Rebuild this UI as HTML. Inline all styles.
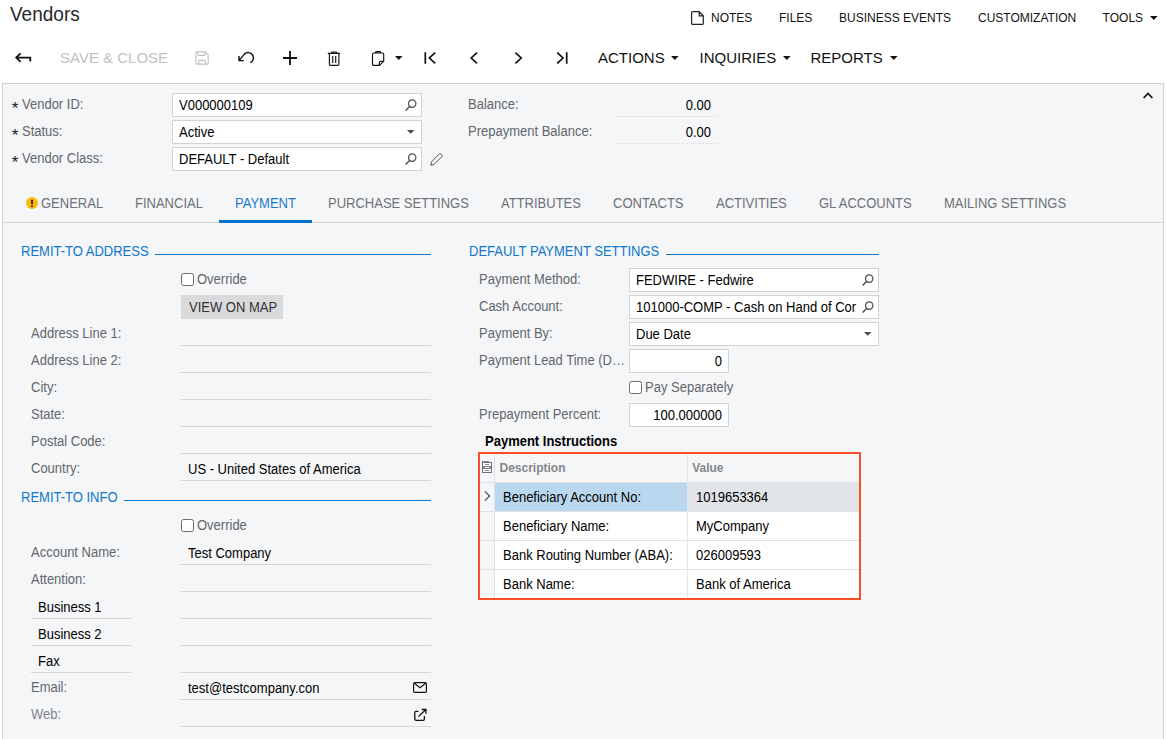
<!DOCTYPE html>
<html><head><meta charset="utf-8"><title>Vendors</title>
<style>
*{box-sizing:border-box;margin:0;padding:0}
html,body{width:1166px;height:739px;overflow:hidden;background:#fff}
body{font-family:"Liberation Sans",Arial,sans-serif;font-size:13px;color:#000;position:relative}
.a{position:absolute;white-space:nowrap;line-height:16px}
.lbl{color:#62666c}
.dis{color:#82858a}
.title{left:10px;top:2px;font-size:19.6px;line-height:24px;color:#26262c;transform:scaleX(.9694);transform-origin:0 0}
.top{font-size:12px;color:#111;top:10px}
.tb{font-size:15px;color:#111;top:49px;line-height:18px}
.panel{position:absolute;left:2px;top:83px;width:1162px;height:660px;background:#f5f6f8;border:1px solid #cfd1d5}
.inp{position:absolute;height:24px;background:#fff;border:1px solid #d0d2d6}
.r{text-align:right}
.s{font-size:14px;transform:scaleX(.92857);transform-origin:0 0;margin-top:-1px}
.s.r{transform-origin:100% 0}
.ul{position:absolute;height:1px;background:#d3d5d9}
.dot{position:absolute;height:1px;width:100px;border-top:1px dotted #dcdee1}
.tab{top:196px;color:#6e7277}
.sec{color:#0f76c9}
.sline{position:absolute;height:1px;background:#0f76c9}
.cb{position:absolute;width:13px;height:13px;border:1px solid #6b6b6b;border-radius:2.5px;background:#fff}
svg{position:absolute;overflow:visible}
.car{position:absolute;width:0;height:0;border-left:3.7px solid transparent;border-right:3.7px solid transparent;border-top:3.8px solid #111}
</style></head><body>
<div class="a title">Vendors</div>

<!-- top right links -->
<svg style="left:691px;top:11px" width="13" height="14" viewBox="0 0 13 14"><path d="M1.2 0.7H8.2L12.3 4.8V12.6Q12.3 13.3 11.6 13.3H1.2Q0.6 13.3 0.6 12.6V1.3Q0.6 0.7 1.2 0.7ZM8.2 0.7V4.8H12.3" fill="none" stroke="#222" stroke-width="1.2"/></svg>
<div class="a top" style="left:711px">NOTES</div>
<div class="a top" style="left:779px">FILES</div>
<div class="a top" style="left:839px">BUSINESS EVENTS</div>
<div class="a top" style="left:978px">CUSTOMIZATION</div>
<div class="a top" style="left:1102.6px">TOOLS</div>
<svg style="left:1150.3px;top:15.8px" width="8" height="5" viewBox="0 0 8 5"><path d="M0 0H7.6L3.8 4.1Z" fill="#111"/></svg>

<!-- toolbar -->
<svg style="left:15px;top:52.3px" width="18" height="12" viewBox="0 0 18 12"><path d="M5.6 1.3L1.2 5.6L5.6 9.9M1.4 5.6H15.3V9.6" fill="none" stroke="#111" stroke-width="1.8"/></svg>
<div class="a tb" style="left:60px;color:#c2c2c2">SAVE &amp; CLOSE</div>
<svg style="left:195px;top:51px" width="14" height="14" viewBox="0 0 14 14"><path d="M1.9 0.9H10.2L13.2 3.9V12Q13.2 13.1 12.1 13.1H1.9Q0.8 13.1 0.8 12V2Q0.8 0.9 1.9 0.9ZM2.8 0.9V3.4Q2.8 4.3 3.7 4.3H9.5Q10.4 4.3 10.4 3.4V1.1M3.7 13.1V10.3Q3.7 9.4 4.6 9.4H9.5Q10.4 9.4 10.4 10.3V13.1" fill="none" stroke="#c1c1c1" stroke-width="1.15"/><path d="M8 1.7V2.7" stroke="#d2d2d2" stroke-width="1.2"/></svg>
<svg style="left:238px;top:51px" width="17" height="13" viewBox="0 0 17 13"><path d="M1 5V9.6H5.8M1 9.6L6.6 2.9A5.3 5.3 0 1 1 12.3 11.7" fill="none" stroke="#111" stroke-width="1.4"/></svg>
<svg style="left:283px;top:51px" width="14" height="14" viewBox="0 0 14 14"><path d="M7 0V14M0 7H14" fill="none" stroke="#111" stroke-width="1.8"/></svg>
<svg style="left:327px;top:51px" width="14" height="15" viewBox="0 0 14 15"><path d="M0.8 2.4H13M4.6 2.4V1.6Q4.6 1 5.2 1H9Q9.6 1 9.6 1.6V2.4M2.4 2.6V13.2Q2.4 14.3 3.5 14.3H10.8Q11.9 14.3 11.9 13.2V2.6M5.7 4.9V12.1M8.7 4.9V12.1" fill="none" stroke="#111" stroke-width="1.15"/></svg>
<svg style="left:371px;top:50px" width="14" height="16" viewBox="0 0 14 16"><path d="M3 3H11.2Q12.7 3 12.7 4.5V11.3L8.4 15.4H3Q1.5 15.4 1.5 13.9V4.5Q1.5 3 3 3ZM4.3 3Q4.3 1.6 5.6 1.6H8.6Q9.9 1.6 9.9 3M8.4 15.4V12.8Q8.4 11.5 9.7 11.4L12.7 11.3" fill="none" stroke="#111" stroke-width="1.15"/></svg>
<svg style="left:394.8px;top:55.8px" width="8" height="5" viewBox="0 0 8 5"><path d="M0 0H7.6L3.8 4.1Z" fill="#111"/></svg>
<svg style="left:424px;top:52px" width="13" height="12" viewBox="0 0 13 12"><path d="M1.3 0.3V11.7M11.2 0.6L5.4 6L11.2 11.4" fill="none" stroke="#111" stroke-width="1.7"/></svg>
<svg style="left:469px;top:52px" width="10" height="12" viewBox="0 0 10 12"><path d="M8 0.6L2.2 6L8 11.4" fill="none" stroke="#111" stroke-width="1.7"/></svg>
<svg style="left:513px;top:52px" width="10" height="12" viewBox="0 0 10 12"><path d="M2.4 0.6L8.2 6L2.4 11.4" fill="none" stroke="#111" stroke-width="1.7"/></svg>
<svg style="left:556px;top:52px" width="13" height="12" viewBox="0 0 13 12"><path d="M10.7 0.3V11.7M1.2 0.6L7 6L1.2 11.4" fill="none" stroke="#111" stroke-width="1.7"/></svg>
<div class="a tb" style="left:598px">ACTIONS</div><svg style="left:671.3px;top:55.8px" width="8" height="5" viewBox="0 0 8 5"><path d="M0 0H7.6L3.8 4.1Z" fill="#111"/></svg>
<div class="a tb" style="left:699.5px">INQUIRIES</div><svg style="left:782.8px;top:55.8px" width="8" height="5" viewBox="0 0 8 5"><path d="M0 0H7.6L3.8 4.1Z" fill="#111"/></svg>
<div class="a tb" style="left:810.5px">REPORTS</div><svg style="left:889.8px;top:55.8px" width="8" height="5" viewBox="0 0 8 5"><path d="M0 0H7.6L3.8 4.1Z" fill="#111"/></svg>

<div class="panel"></div>
<svg style="left:1143px;top:92px" width="10" height="7" viewBox="0 0 10 7"><path d="M0.6 6L5 1.4L9.4 6" fill="none" stroke="#111" stroke-width="1.7"/></svg>

<!-- header form -->
<div class="a" style="left:11.7px;top:101px;font-size:17px;color:#222">*</div>
<div class="a lbl s" style="left:22px;top:97px">Vendor ID:</div>
<div class="a" style="left:11.7px;top:128px;font-size:17px;color:#222">*</div>
<div class="a lbl s" style="left:22px;top:124px">Status:</div>
<div class="a" style="left:11.7px;top:155px;font-size:17px;color:#222">*</div>
<div class="a lbl s" style="left:22px;top:151px">Vendor Class:</div>
<div class="inp" style="left:172px;top:93px;width:250px"></div><div class="a s" style="left:179px;top:98px">V000000109</div>
<div class="inp" style="left:172px;top:120px;width:250px"></div><div class="a s" style="left:179px;top:125px">Active</div>
<div class="inp" style="left:172px;top:147px;width:250px"></div><div class="a s" style="left:179px;top:152px">DEFAULT - Default</div>
<svg class="mag" style="left:405px;top:99px" width="12" height="12" viewBox="0 0 12 12"><circle cx="7.2" cy="4.6" r="3.7" fill="none" stroke="#4a4a4a" stroke-width="1.2"/><path d="M4.6 7.4L0.6 11.4" stroke="#4a4a4a" stroke-width="1.4"/></svg>
<svg style="left:406.8px;top:129.8px" width="8" height="5" viewBox="0 0 8 5"><path d="M0 0H7.4L3.7 3.7Z" fill="#4a4a4a"/></svg>
<svg class="mag" style="left:405px;top:153px" width="12" height="12" viewBox="0 0 12 12"><circle cx="7.2" cy="4.6" r="3.7" fill="none" stroke="#4a4a4a" stroke-width="1.2"/><path d="M4.6 7.4L0.6 11.4" stroke="#4a4a4a" stroke-width="1.4"/></svg>
<svg style="left:430px;top:153px" width="13" height="13" viewBox="0 0 13 13"><path d="M0.8 12.2L1.6 8.6L9.4 0.9Q10.2 0.3 11 1L12 2Q12.6 2.8 12 3.5L4.2 11.4Z" fill="none" stroke="#555" stroke-width="1"/></svg>

<div class="a lbl s" style="left:468px;top:97px">Balance:</div>
<div class="a lbl s" style="left:468px;top:124px">Prepayment Balance:</div>
<div class="a r s" style="left:618px;top:98px;width:93px">0.00</div>
<div class="a r s" style="left:618px;top:125px;width:93px">0.00</div>
<div class="dot" style="left:618px;top:116px"></div>
<div class="dot" style="left:618px;top:143px"></div>

<!-- tabs -->
<div class="ul" style="left:3px;top:222px;width:1160px;background:#d4d6da"></div>
<div style="position:absolute;left:219px;top:220px;width:93px;height:3px;background:#0273c9"></div>
<svg style="left:26px;top:197px" width="12" height="12" viewBox="0 0 12 12"><circle cx="6" cy="6" r="6" fill="#fcb714"/><path d="M6 2.7V7.2" stroke="#222" stroke-width="1.7"/><circle cx="6" cy="9.2" r="1" fill="#222"/></svg>
<div class="a tab s" style="left:40.5px">GENERAL</div>
<div class="a tab s" style="left:135.3px">FINANCIAL</div>
<div class="a tab s" style="left:235.4px;color:#1a7bc9">PAYMENT</div>
<div class="a tab s" style="left:328.2px">PURCHASE SETTINGS</div>
<div class="a tab s" style="left:501px">ATTRIBUTES</div>
<div class="a tab s" style="left:613.3px">CONTACTS</div>
<div class="a tab s" style="left:716px">ACTIVITIES</div>
<div class="a tab s" style="left:819.3px">GL ACCOUNTS</div>
<div class="a tab s" style="left:944.2px">MAILING SETTINGS</div>

<!-- left column -->
<div class="a sec s" style="left:21.3px;top:244px">REMIT-TO ADDRESS</div>
<div class="sline" style="left:155px;top:254px;width:276px"></div>
<div class="cb" style="left:181px;top:273px"></div>
<div class="a lbl s" style="left:196.9px;top:272px">Override</div>
<div style="position:absolute;left:181px;top:295px;width:102px;height:24px;background:#d9dadc"></div><div class="a s" style="left:188.5px;top:300px;color:#333">VIEW ON MAP</div>
<div class="a lbl s" style="left:31.3px;top:326px">Address Line 1:</div>
<div class="a lbl s" style="left:31.3px;top:353px">Address Line 2:</div>
<div class="a lbl s" style="left:31.3px;top:380px">City:</div>
<div class="a lbl s" style="left:31.3px;top:407px">State:</div>
<div class="a lbl s" style="left:31.3px;top:434px">Postal Code:</div>
<div class="a lbl s" style="left:31.3px;top:461px">Country:</div>
<div class="ul" style="left:181px;top:345px;width:250px"></div>
<div class="ul" style="left:181px;top:372px;width:250px"></div>
<div class="ul" style="left:181px;top:399px;width:250px"></div>
<div class="ul" style="left:181px;top:426px;width:250px"></div>
<div class="ul" style="left:181px;top:453px;width:250px"></div>
<div class="ul" style="left:181px;top:480px;width:250px"></div>
<div class="a s" style="left:188.2px;top:462px">US - United States of America</div>

<div class="a sec s" style="left:21.3px;top:490px">REMIT-TO INFO</div>
<div class="sline" style="left:124px;top:500px;width:307px"></div>
<div class="cb" style="left:181px;top:519px"></div>
<div class="a lbl s" style="left:196.9px;top:518px">Override</div>
<div class="a lbl s" style="left:31.3px;top:545px">Account Name:</div>
<div class="a lbl s" style="left:31.3px;top:572px">Attention:</div>
<div class="a s" style="left:38.3px;top:600px">Business 1</div>
<div class="a s" style="left:38.3px;top:627px">Business 2</div>
<div class="a s" style="left:38.3px;top:654px">Fax</div>
<div class="a lbl s" style="left:31.3px;top:680px">Email:</div>
<div class="a dis s" style="left:31.3px;top:707px">Web:</div>
<div class="ul" style="left:181px;top:564px;width:250px"></div>
<div class="ul" style="left:181px;top:591px;width:250px"></div>
<div class="ul" style="left:181px;top:618px;width:250px"></div>
<div class="ul" style="left:181px;top:645px;width:250px"></div>
<div class="ul" style="left:181px;top:672px;width:250px"></div>
<div class="ul" style="left:181px;top:699px;width:250px"></div>
<div class="ul" style="left:181px;top:726px;width:250px"></div>
<div class="ul" style="left:31px;top:618px;width:100px"></div>
<div class="ul" style="left:31px;top:645px;width:100px"></div>
<div class="ul" style="left:31px;top:672px;width:100px"></div>
<div class="a s" style="left:188.2px;top:546px">Test Company</div>
<div class="a s" style="left:188.2px;top:681px">test@testcompany.con</div>
<svg style="left:413px;top:682px" width="14" height="11" viewBox="0 0 14 11"><rect x="0.6" y="0.6" width="12.8" height="9.8" rx="1.4" fill="none" stroke="#111" stroke-width="1.2"/><path d="M1 1L7 5.8L13 1" fill="none" stroke="#111" stroke-width="1.1"/></svg>
<svg style="left:414px;top:708px" width="14" height="14" viewBox="0 0 14 14"><path d="M4.4 3.3H2.2Q0.8 3.3 0.8 4.7V10.9Q0.8 12.3 2.2 12.3H9Q10.4 12.3 10.4 10.9V8" fill="none" stroke="#111" stroke-width="1.3"/><path d="M4.4 8.6L11.9 1.5M7.7 1.5H12V5.8" fill="none" stroke="#111" stroke-width="1.3"/></svg>

<!-- right column -->
<div class="a sec s" style="left:469.2px;top:244px">DEFAULT PAYMENT SETTINGS</div>
<div class="sline" style="left:666px;top:254px;width:213px"></div>
<div class="a lbl s" style="left:479.4px;top:272px">Payment Method:</div>
<div class="a lbl s" style="left:479.4px;top:299px">Cash Account:</div>
<div class="a lbl s" style="left:479.4px;top:326px">Payment By:</div>
<div class="a lbl s" style="left:479.4px;top:353px;width:158.3px;overflow:hidden;text-overflow:ellipsis">Payment Lead Time (Days):</div>
<div class="a lbl s" style="left:479.4px;top:407px">Prepayment Percent:</div>
<div class="inp" style="left:629px;top:268px;width:250px"></div><div class="a s" style="left:636px;top:273px">FEDWIRE - Fedwire</div>
<div class="inp" style="left:629px;top:295px;width:250px"></div><div class="a s" style="left:636px;top:300px">101000-COMP - Cash on Hand of Cor</div>
<div class="inp" style="left:629px;top:322px;width:250px"></div><div class="a s" style="left:636px;top:327px">Due Date</div>
<div class="inp" style="left:629px;top:349px;width:100px"></div><div class="a r s" style="left:629px;top:354px;width:93px">0</div>
<div class="inp" style="left:629px;top:403px;width:100px"></div><div class="a r s" style="left:629px;top:408px;width:93px">100.000000</div>
<svg class="mag" style="left:862px;top:274px" width="12" height="12" viewBox="0 0 12 12"><circle cx="7.2" cy="4.6" r="3.7" fill="none" stroke="#4a4a4a" stroke-width="1.2"/><path d="M4.6 7.4L0.6 11.4" stroke="#4a4a4a" stroke-width="1.4"/></svg>
<svg class="mag" style="left:862px;top:301px" width="12" height="12" viewBox="0 0 12 12"><circle cx="7.2" cy="4.6" r="3.7" fill="none" stroke="#4a4a4a" stroke-width="1.2"/><path d="M4.6 7.4L0.6 11.4" stroke="#4a4a4a" stroke-width="1.4"/></svg>
<svg style="left:863.8px;top:331.8px" width="8" height="5" viewBox="0 0 8 5"><path d="M0 0H7.4L3.7 3.7Z" fill="#4a4a4a"/></svg>
<div class="cb" style="left:629px;top:381px"></div>
<div class="a lbl s" style="left:645px;top:380px">Pay Separately</div>
<div class="a s" style="left:485.2px;top:434px;font-weight:bold">Payment Instructions</div>

<!-- grid -->
<div style="position:absolute;left:478px;top:452px;width:383px;height:148px;border:2px solid #fb4f27;background:#fff"></div>
<div style="position:absolute;left:480px;top:454px;width:379px;height:28px;background:#f5f6f8"></div>
<div style="position:absolute;left:480px;top:454px;width:14px;height:144px;background:#f5f6f8"></div>
<div style="position:absolute;left:495px;top:483px;width:192px;height:28px;background:#b9d8ef"></div>
<div style="position:absolute;left:688px;top:483px;width:171px;height:28px;background:#e1e4e8"></div>
<div class="ul" style="left:480px;top:482px;width:379px;background:#dfe1e5"></div>
<div class="ul" style="left:480px;top:511px;width:379px;background:#dfe1e5"></div>
<div class="ul" style="left:480px;top:540px;width:379px;background:#dfe1e5"></div>
<div class="ul" style="left:480px;top:569px;width:379px;background:#dfe1e5"></div>
<div style="position:absolute;left:494px;top:454px;width:1px;height:144px;background:#dfe1e5"></div>
<div style="position:absolute;left:687px;top:454px;width:1px;height:144px;background:#e4e6e9"></div>
<svg style="left:482px;top:461px" width="10" height="12" viewBox="0 0 10 12"><rect x="0.5" y="1.5" width="9" height="10" fill="#fff" stroke="#707078"/><rect x="0" y="0.2" width="7" height="1.3" fill="#707078"/><rect x="0" y="5.1" width="10" height="2.8" fill="#707078"/><rect x="2.6" y="6" width="4.8" height="1" fill="#fff"/><rect x="3" y="3" width="4" height="1" fill="#8a8a94"/><rect x="3" y="9" width="4" height="1" fill="#8a8a94"/></svg>
<svg style="left:484px;top:491px" width="7" height="10" viewBox="0 0 7 10"><path d="M0.8 0.4L5.6 5L0.8 9.6" fill="none" stroke="#555" stroke-width="1.3"/></svg>
<div class="a" style="left:499.5px;top:460px;font-size:12px;font-weight:bold;color:#84878c">Description</div>
<div class="a" style="left:692.2px;top:460px;font-size:12px;font-weight:bold;color:#84878c">Value</div>
<div class="a s" style="left:503.4px;top:490px">Beneficiary Account No:</div>
<div class="a s" style="left:503.4px;top:519px">Beneficiary Name:</div>
<div class="a s" style="left:503.4px;top:548px">Bank Routing Number (ABA):</div>
<div class="a s" style="left:503.4px;top:577px">Bank Name:</div>
<div class="a s" style="left:696.3px;top:490px">1019653364</div>
<div class="a s" style="left:696.3px;top:519px">MyCompany</div>
<div class="a s" style="left:696.3px;top:548px">026009593</div>
<div class="a s" style="left:696.3px;top:577px">Bank of America</div>
</body></html>
